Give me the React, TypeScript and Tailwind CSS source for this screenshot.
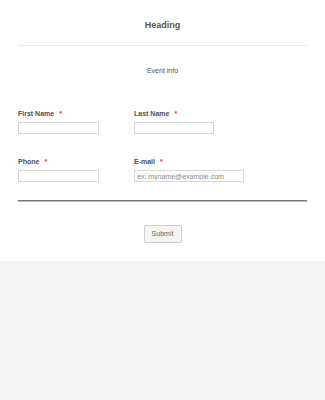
const Field = ({
  label,
  width,
  placeholder,
}: {
  label: string;
  width: string;
  placeholder?: string;
}) => (
  <div className="flex flex-col">
    <label className="text-[7px] leading-[8px] font-bold text-[#4f4f4f]">
      {label}
      <span className="ml-[5px] text-[#e53935]">*</span>
    </label>
    <input
      type="text"
      placeholder={placeholder}
      className={`mt-[4px] h-[12px] ${width} border border-[#d8d8d8] bg-white px-[2px] text-[7px] leading-[10px] text-[#555] placeholder:text-[#8a8a8a] outline-none`}
    />
  </div>
);

const App = () => {
  return (
    <div
      className="min-h-screen w-full bg-[#f3f3f3]"
      style={{ fontFamily: '"Liberation Sans", Arial, sans-serif' }}
    >
      <div className="bg-white px-[18px] pt-[20px] pb-[18px]">
        <div className="border-b border-[#e8e8e8] pb-[15px] text-center text-[9px] leading-[10px] font-bold text-[#555]">
          Heading
        </div>

        <p className="mt-[21px] text-center text-[7px] leading-[8px] text-[#555]">Event info</p>

        <div className="mt-[35px] grid grid-cols-[116px_1fr] gap-y-[24px]">
          <Field label="First Name" width="w-[81px]" />
          <Field label="Last Name" width="w-[80px]" />
          <Field label="Phone" width="w-[81px]" />
          <Field label="E-mail" width="w-[110px]" placeholder="ex: myname@example.com" />
        </div>

        <div className="mt-[18px] h-[2px] border-t border-[#777] bg-[#b8b8b8]" />

        <div className="mt-[23px] flex justify-center">
          <button
            type="button"
            className="h-[18px] w-[38px] rounded-[2px] border border-[#d0d0d0] bg-[#f4f4f4] text-[7px] leading-[8px] text-[#666]"
          >
            Submit
          </button>
        </div>
      </div>
    </div>
  );
};

export default App;
